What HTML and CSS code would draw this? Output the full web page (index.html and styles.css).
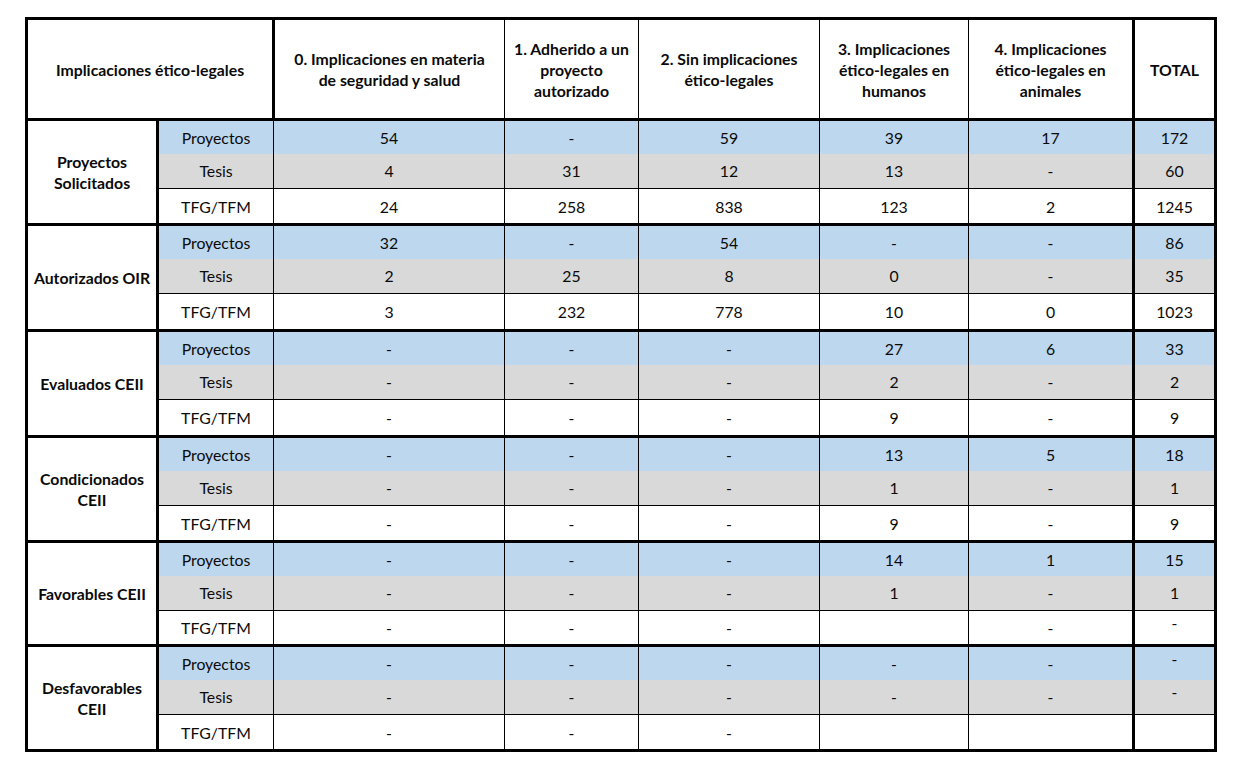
FILE: index.html
```html
<!DOCTYPE html>
<html lang="es">
<head>
<meta charset="utf-8">
<title>Implicaciones ético-legales</title>
<link rel="stylesheet" href="styles.css">
</head>
<body>
<div class="page">
<table class="stats">
  <colgroup>
    <col class="c-group">
    <col class="c-sub">
    <col class="c-0">
    <col class="c-1">
    <col class="c-2">
    <col class="c-3">
    <col class="c-4">
    <col class="c-total">
  </colgroup>
  <thead>
    <tr class="head">
      <th colspan="2" class="thick-r">Implicaciones ético-legales</th>
      <th>0. Implicaciones en materia<br>de seguridad y salud</th>
      <th>1. Adherido a un<br>proyecto<br>autorizado</th>
      <th>2. Sin implicaciones<br>ético-legales</th>
      <th>3. Implicaciones<br>ético-legales en<br>humanos</th>
      <th>4. Implicaciones<br>ético-legales en<br>animales</th>
      <th class="thick-l">TOTAL</th>
    </tr>
  </thead>
  <tbody>
    <tr class="r1 blue">
      <th rowspan="3" class="group">Proyectos<br>Solicitados</th>
      <td class="sub">Proyectos</td><td>54</td><td>-</td><td>59</td><td>39</td><td>17</td><td class="thick-l">172</td>
    </tr>
    <tr class="r2 gray">
      <td class="sub">Tesis</td><td>4</td><td>31</td><td>12</td><td>13</td><td>-</td><td class="thick-l">60</td>
    </tr>
    <tr class="r3">
      <td class="sub">TFG/TFM</td><td>24</td><td>258</td><td>838</td><td>123</td><td>2</td><td class="thick-l">1245</td>
    </tr>
  </tbody>
  <tbody class="g-tall">
    <tr class="r1 blue">
      <th rowspan="3" class="group">Autorizados OIR</th>
      <td class="sub">Proyectos</td><td>32</td><td>-</td><td>54</td><td>-</td><td>-</td><td class="thick-l">86</td>
    </tr>
    <tr class="r2 gray">
      <td class="sub">Tesis</td><td>2</td><td>25</td><td>8</td><td>0</td><td>-</td><td class="thick-l">35</td>
    </tr>
    <tr class="r3">
      <td class="sub">TFG/TFM</td><td>3</td><td>232</td><td>778</td><td>10</td><td>0</td><td class="thick-l">1023</td>
    </tr>
  </tbody>
  <tbody class="g-tall">
    <tr class="r1 blue">
      <th rowspan="3" class="group">Evaluados CEII</th>
      <td class="sub">Proyectos</td><td>-</td><td>-</td><td>-</td><td>27</td><td>6</td><td class="thick-l">33</td>
    </tr>
    <tr class="r2 gray">
      <td class="sub">Tesis</td><td>-</td><td>-</td><td>-</td><td>2</td><td>-</td><td class="thick-l">2</td>
    </tr>
    <tr class="r3">
      <td class="sub">TFG/TFM</td><td>-</td><td>-</td><td>-</td><td>9</td><td>-</td><td class="thick-l">9</td>
    </tr>
  </tbody>
  <tbody>
    <tr class="r1 blue">
      <th rowspan="3" class="group">Condicionados<br>CEII</th>
      <td class="sub">Proyectos</td><td>-</td><td>-</td><td>-</td><td>13</td><td>5</td><td class="thick-l">18</td>
    </tr>
    <tr class="r2 gray">
      <td class="sub">Tesis</td><td>-</td><td>-</td><td>-</td><td>1</td><td>-</td><td class="thick-l">1</td>
    </tr>
    <tr class="r3">
      <td class="sub">TFG/TFM</td><td>-</td><td>-</td><td>-</td><td>9</td><td>-</td><td class="thick-l">9</td>
    </tr>
  </tbody>
  <tbody class="g-short">
    <tr class="r1 blue">
      <th rowspan="3" class="group">Favorables CEII</th>
      <td class="sub">Proyectos</td><td>-</td><td>-</td><td>-</td><td>14</td><td>1</td><td class="thick-l">15</td>
    </tr>
    <tr class="r2 gray">
      <td class="sub">Tesis</td><td>-</td><td>-</td><td>-</td><td>1</td><td>-</td><td class="thick-l">1</td>
    </tr>
    <tr class="r3">
      <td class="sub">TFG/TFM</td><td>-</td><td>-</td><td>-</td><td></td><td>-</td><td class="thick-l top">-</td>
    </tr>
  </tbody>
  <tbody>
    <tr class="r1 blue">
      <th rowspan="3" class="group">Desfavorables<br>CEII</th>
      <td class="sub">Proyectos</td><td>-</td><td>-</td><td>-</td><td>-</td><td>-</td><td class="thick-l top">-</td>
    </tr>
    <tr class="r2 gray">
      <td class="sub">Tesis</td><td>-</td><td>-</td><td>-</td><td>-</td><td>-</td><td class="thick-l top">-</td>
    </tr>
    <tr class="r3">
      <td class="sub">TFG/TFM</td><td>-</td><td>-</td><td>-</td><td></td><td></td><td class="thick-l"></td>
    </tr>
  </tbody>
</table>
</div>
</body>
</html>
```

FILE: styles.css
```css
html, body {
  margin: 0;
  padding: 0;
  background: #ffffff;
}

.page {
  padding: 17px 0 0 25px;
}

.stats {
  border-collapse: collapse;
  table-layout: fixed;
  width: 1189px;
  border: 3px solid #000;
  font-family: Lato, "Liberation Sans", sans-serif;
  font-size: 15.8px;
  line-height: 21px;
  color: #0a0a0a;
}

.c-group { width: 131px; }
.c-sub { width: 116px; }
.c-0 { width: 231px; }
.c-1 { width: 134px; }
.c-2 { width: 181px; }
.c-3 { width: 149px; }
.c-4 { width: 165px; }
.c-total { width: 82px; }

.stats th,
.stats td {
  border: 1px solid #000;
  padding: 0 2px;
  text-align: center;
  vertical-align: middle;
  font-weight: normal;
}

.stats tbody {
  border-top: 3px solid #000;
}

.head {
  height: 101px;
}

.head th {
  font-weight: bold;
}

.stats th.group {
  font-weight: bold;
  border-right: 3px solid #000;
  background: #fff;
}

.stats .thick-r {
  border-right: 3px solid #000;
}

.stats .thick-l {
  border-left: 3px solid #000;
}

.r1 { height: 34px; }
.r2 { height: 35px; }
.r3 { height: 36px; }

.g-tall .r3 { height: 37px; }
.g-short .r3 { height: 35px; }

.blue td {
  background: #bdd7ee;
}

.gray td {
  background: #d9d9d9;
}

.stats .r1 td {
  border-bottom-style: hidden;
}

.stats td.top {
  vertical-align: top;
  padding-top: 1px;
}
```
